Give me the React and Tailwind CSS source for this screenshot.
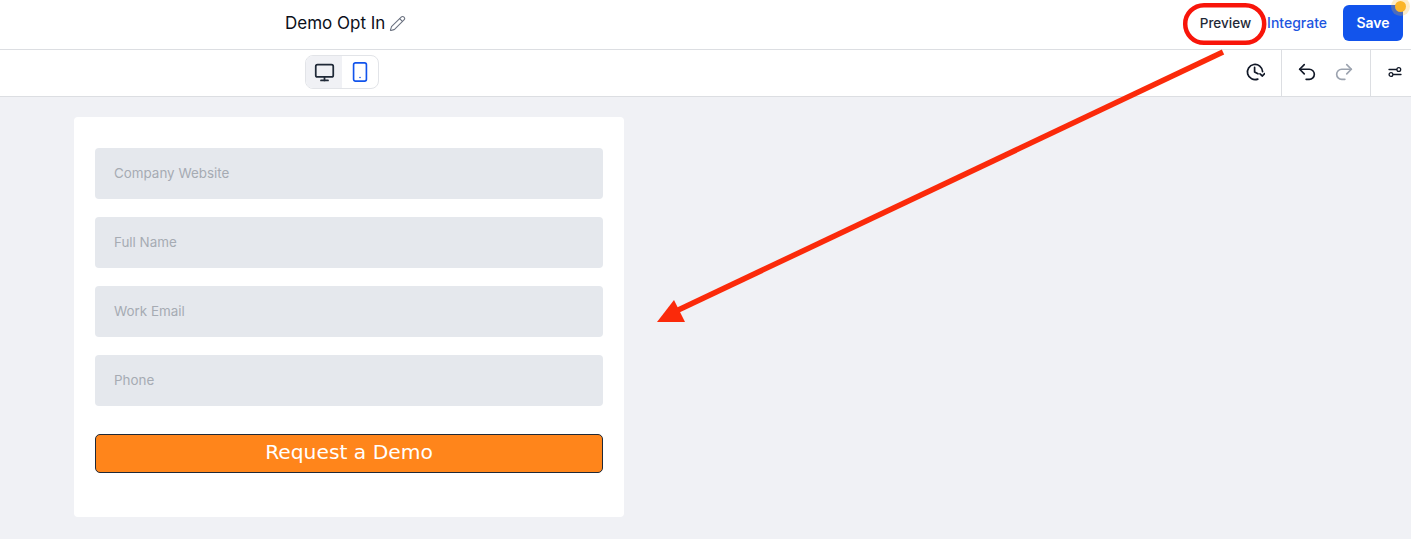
import { Monitor, Pencil, Redo2, Smartphone, Undo2 } from "lucide-react";

const fields = ["Company Website", "Full Name", "Work Email", "Phone"];

function ClockIcon() {
  return (
    <svg width="20" height="20" viewBox="0 0 20 20" fill="none" stroke="#111827" strokeWidth="1.7" strokeLinecap="round" strokeLinejoin="round">
      <path d="M17.6 9.6A7.6 7.6 0 1 0 12.8 17.1" />
      <path d="M9.6 5.4V10L13 11.8" />
      <path d="M15 11.8L17.4 14L19.6 11.6" />
    </svg>
  );
}

function TuneIcon() {
  return (
    <svg width="16" height="16" viewBox="0 0 16 16" fill="none" stroke="#111827" strokeWidth="1.3" strokeLinecap="round">
      <path d="M2 5.5H9.5" />
      <circle cx="11.8" cy="5.5" r="1.9" />
      <path d="M14 10.5H6.5" />
      <circle cx="4" cy="10.5" r="1.9" />
    </svg>
  );
}

function Annotation() {
  return (
    <svg className="absolute left-0 top-0 pointer-events-none" width="1411" height="539" viewBox="0 0 1411 539" fill="none">
      <rect x="1185.2" y="5.2" width="79" height="37.6" rx="18.8" stroke="#f8150a" strokeWidth="4.5" />
      <path d="M1223 52L674 312" stroke="#fb2a0a" strokeWidth="5.5" />
      <path d="M657 322L674 300L685 322Z" fill="#fb2a0a" />
    </svg>
  );
}

export default function App() {
  return (
    <div className="relative flex h-[539px] w-[1411px] flex-col overflow-hidden bg-[#f0f1f5] font-['Inter',sans-serif]">
      <header className="flex h-[50px] items-center border-b border-[#dcdee2] bg-white pb-[3px] pl-[285px] pr-2">
        <h1 className="text-[17px] leading-6 text-[#0b0f19]">Demo Opt In</h1>
        <Pencil className="ml-[4px] text-[#6b7280]" size={17} strokeWidth={1.5} />
        <div className="ml-auto flex items-center">
          <button className="mr-4 text-[13.5px] font-medium text-[#1f2937]" type="button">Preview</button>
          <button className="mr-4 text-sm font-medium text-[#1d55e0]" type="button">Integrate</button>
          <button className="relative h-9 w-[60px] rounded-md bg-[#1254ec] text-sm font-semibold text-white" type="button">
            Save
            <span className="absolute -right-[3px] -top-[4px] h-[11px] w-[11px] rounded-full bg-[#fbb529] ring-4 ring-[#fbb529]/25" />
          </button>
        </div>
      </header>

      <div className="flex h-[47px] items-stretch border-b border-[#dcdee2] bg-white pl-[305px]">
        <div className="my-[5px] flex h-[34px] w-[74px] overflow-hidden rounded-lg border border-[#e2e4e8]">
          <span className="flex w-[36px] items-center justify-center bg-[#f0f1f5]">
            <Monitor className="text-[#1f2937]" size={21} strokeWidth={2} />
          </span>
          <span className="flex flex-1 items-center justify-center">
            <Smartphone className="text-[#1254ec]" size={22} strokeWidth={1.8} />
          </span>
        </div>
        <div className="ml-auto flex items-center pb-[3px] pr-[16px]">
          <ClockIcon />
        </div>
        <div className="flex w-[90px] items-center justify-between border-x border-[#dcdee2] pb-[3px] pl-[14px] pr-[15px]">
          <Undo2 className="text-[#111827]" size={22} strokeWidth={1.8} />
          <Redo2 className="text-[#9ca3af]" size={22} strokeWidth={1.8} />
        </div>
        <div className="flex w-[40px] items-center justify-center pb-[3px] pl-[8px]">
          <TuneIcon />
        </div>
      </div>

      <main className="px-[74px] pt-5">
        <form className="flex h-[400px] w-[550px] flex-col gap-[18px] rounded bg-white px-[21px] pt-[31px]">
          {fields.map((field) => (
            <div className="flex h-[51px] items-center rounded bg-[#e5e8ed] pl-[19px] text-[13.4px] text-[#a6abb3]" key={field}>
              {field}
            </div>
          ))}
          <button className="mt-[10px] h-[39px] rounded-[5px] border border-[#1f2937] bg-[#ff851b] pb-[2px] font-['DejaVu_Sans',sans-serif] text-[20.25px] text-white" type="button">
            Request a Demo
          </button>
        </form>
      </main>

      <Annotation />
    </div>
  );
}
